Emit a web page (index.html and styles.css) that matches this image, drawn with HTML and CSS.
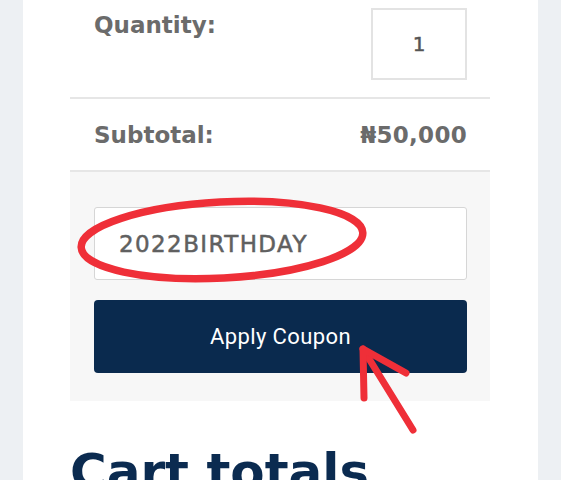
FILE: index.html
```html
<!DOCTYPE html>
<html lang="en">
<head>
<meta charset="utf-8">
<title>Cart</title>
<link rel="stylesheet" href="styles.css">
</head>
<body>
<div class="page">
  <div class="card">
    <div class="cart-table">
      <div class="row row-qty">
        <span class="label">Quantity:</span>
        <div class="qty-box">1</div>
      </div>
      <div class="row row-sub">
        <span class="label">Subtotal:</span>
        <span class="label amount">₦50,000</span>
      </div>
      <div class="coupon">
        <div class="coupon-input">2022BIRTHDAY</div>
        <button class="coupon-btn">Apply Coupon</button>
      </div>
    </div>
    <h2 class="totals-title">Cart totals</h2>
  </div>
  <svg class="annotation" width="561" height="480" viewBox="0 0 561 480" aria-hidden="true">
    <ellipse cx="222" cy="240" rx="141" ry="38" transform="rotate(-3 222 240)" fill="none" stroke="#ef2f38" stroke-width="7.5"/>
    <g fill="none" stroke="#ef2f38" stroke-width="7" stroke-linecap="round" stroke-linejoin="round">
      <path d="M363 349 L413 430"/>
      <path d="M364 398 L363 349 L406 373"/>
    </g>
  </svg>
</div>
</body>
</html>
```

FILE: styles.css
```css
html, body {
  margin: 0;
  padding: 0;
}
body {
  background: #edf0f3;
  height: 480px;
  overflow: hidden;
  font-family: "DejaVu Sans", sans-serif;
}
.page {
  position: relative;
  height: 480px;
}
.card {
  margin: 0 23px;
  background: #ffffff;
  padding: 0 48px 0 47px;
  height: 480px;
}
.row {
  display: flex;
  justify-content: space-between;
  padding: 0 23px 0 24px;
  border-bottom: 2px solid #e6e6e6;
}
.row-qty {
  align-items: flex-start;
  padding-top: 8px;
  padding-bottom: 17px;
}
.row-qty .label {
  padding-top: 4px;
}
.row-sub {
  align-items: center;
  height: 71px;
}
.label {
  font-weight: 700;
  font-size: 23px;
  line-height: 26px;
  color: #6b6b6b;
}
.amount {
  letter-spacing: 0.3px;
}
.qty-box {
  width: 96px;
  height: 72px;
  box-sizing: border-box;
  border: 2px solid #e3e3e3;
  display: flex;
  align-items: center;
  justify-content: center;
  font-size: 20px;
  color: #555555;
  -webkit-text-stroke: 0.5px #555555;
}
.coupon {
  background: #f7f7f7;
  padding: 35px 23px 28px 24px;
  display: flex;
  flex-direction: column;
  gap: 20px;
}
.coupon-input {
  height: 73px;
  box-sizing: border-box;
  background: #ffffff;
  border: 1px solid #d6d6d6;
  border-radius: 3px;
  display: flex;
  align-items: center;
  padding-left: 24px;
  font-size: 23px;
  letter-spacing: 1.4px;
  color: #606060;
  -webkit-text-stroke: 0.5px #606060;
}
.coupon-btn {
  height: 73px;
  width: 100%;
  border: none;
  border-radius: 4px;
  background: #0a2a4e;
  color: #ffffff;
  font-family: Roboto, sans-serif;
  font-size: 22px;
  letter-spacing: 0.4px;
  padding: 0;
}
.totals-title {
  margin: 41px 0 0 0;
  font-weight: 700;
  font-size: 50px;
  line-height: 60px;
  color: #0b2b50;
}
.annotation {
  position: absolute;
  top: 0;
  left: 0;
  pointer-events: none;
}
```
